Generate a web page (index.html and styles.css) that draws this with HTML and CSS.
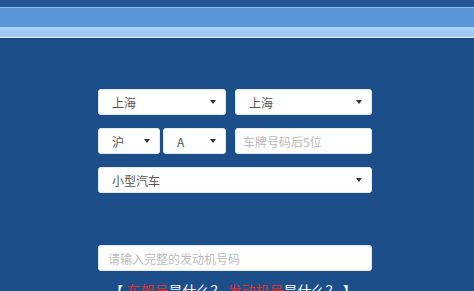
FILE: index.html
```html
<!DOCTYPE html>
<html lang="zh-CN">
<head>
<meta charset="utf-8">
<title>车辆查询</title>
<link rel="stylesheet" href="styles.css">
</head>
<body>
<header class="topbar">
  <div class="topbar-edge"></div>
  <div class="topbar-main"></div>
  <div class="topbar-light"></div>
  <div class="topbar-line"></div>
  <div class="topbar-shadow"></div>
</header>
<main class="form">
  <div class="row">
    <div class="field select w128"><span>上海</span><i class="arrow"></i></div>
    <div class="field select grow"><span>上海</span><i class="arrow"></i></div>
  </div>
  <div class="row">
    <div class="field select w62"><span>沪</span><i class="arrow"></i></div>
    <div class="field select w63"><span>A</span><i class="arrow"></i></div>
    <div class="field input grow ml9"><span class="ph">车牌号码后5位</span></div>
  </div>
  <div class="row">
    <div class="field select grow"><span>小型汽车</span><i class="arrow"></i></div>
  </div>
  <div class="row engine">
    <div class="field input grow pl10"><span class="ph">请输入完整的发动机号码</span></div>
  </div>
  <p class="help">【 <em>车架号</em>是什么？ <em>发动机号</em>是什么？ 】</p>
</main>
</body>
</html>
```
FILE: styles.css
```css
html, body {
  margin: 0;
  padding: 0;
  background: #1c4e8a;
  height: 100%;
  overflow: hidden;
  font-family: "Noto Sans CJK SC", "Open Sans", sans-serif;
}
.topbar {
  display: flex;
  flex-direction: column;
}
.topbar-edge {
  height: 7px;
  background: #235493;
  border-bottom: 1px solid #8cc0e6;
}
.topbar-main {
  height: 19px;
  background: linear-gradient(#5b97d8, #5a95d4);
}
.topbar-light {
  height: 10px;
  background: linear-gradient(#a8d0f7, #9ac6f2);
}
.topbar-line {
  height: 1px;
  background: #e8f4ff;
}
.topbar-shadow {
  height: 1px;
  background: #153f70;
}
.form {
  width: 274px;
  margin: 50px 0 0 98px;
  display: flex;
  flex-direction: column;
  gap: 13px;
}
.row {
  display: flex;
  gap: 3px;
}
.row:first-child {
  gap: 9px;
}
.engine {
  margin-top: 39px;
}
.field {
  height: 26px;
  box-sizing: border-box;
  background: #fff;
  border-radius: 4px;
  box-shadow: inset 0 0 0 1px #e4e9ef;
  display: flex;
  align-items: center;
  font-size: 12px;
  color: #555;
  position: relative;
}
.select {
  padding: 0 10px 0 14px;
  justify-content: space-between;
}
.input {
  padding: 0 8px;
}
.pl10 {
  padding-left: 10px;
}
.w128 { width: 128px; }
.w62 { width: 62px; }
.w63 { width: 63px; }
.grow { flex: 1; }
.ml9 { margin-left: 6px; }
.ph {
  color: #b9bcc0;
}
.arrow {
  width: 0;
  height: 0;
  border-left: 3px solid transparent;
  border-right: 3px solid transparent;
  border-top: 4px solid #333;
}
.help {
  margin: -4px 0 0 -4px;
  text-align: center;
  font-size: 14px;
  color: #fff;
  white-space: nowrap;
}
.help em {
  font-style: normal;
  color: #e0302e;
}
```
